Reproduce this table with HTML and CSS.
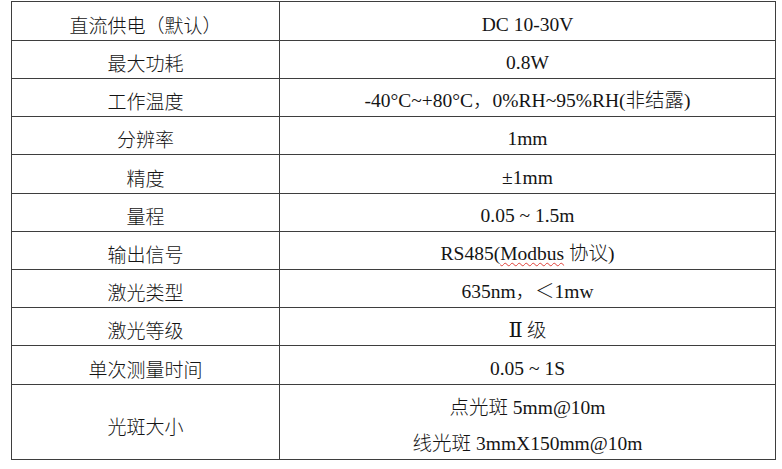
FILE: index.html
```html
<!DOCTYPE html>
<html lang="zh-CN">
<head>
<meta charset="utf-8">
<title>参数表</title>
<link rel="stylesheet" href="styles.css">
</head>
<body>
<div class="sheet">
  <div class="spec">
    <div class="cell name r39"><span>直流供电（默认）</span></div><div class="cell val r39"><span>DC 10-30V</span></div>
    <div class="cell name r38"><span>最大功耗</span></div><div class="cell val r38"><span>0.8W</span></div>
    <div class="cell name r38"><span>工作温度</span></div><div class="cell val r38"><span>-40°C~+80°C，0%RH~95%RH(非结露)</span></div>
    <div class="cell name r38"><span>分辨率</span></div><div class="cell val r38"><span>1mm</span></div>
    <div class="cell name r39"><span>精度</span></div><div class="cell val r39"><span>±1mm</span></div>
    <div class="cell name r38"><span>量程</span></div><div class="cell val r38"><span>0.05 ~ 1.5m</span></div>
    <div class="cell name r38"><span>输出信号</span></div><div class="cell val r38"><span>RS485(<span class="spell">Modbus</span> 协议)</span></div>
    <div class="cell name r38"><span>激光类型</span></div><div class="cell val r38"><span>635nm，＜1mw</span></div>
    <div class="cell name r38"><span>激光等级</span></div><div class="cell val r38"><span><span class="roman">Ⅱ</span>级</span></div>
    <div class="cell name r39"><span>单次测量时间</span></div><div class="cell val r39"><span>0.05 ~ 1S</span></div>
    <div class="cell name r75"><span>光斑大小</span></div><div class="cell val r75 multi"><div class="line">点光斑 5mm@10m</div><div class="line">线光斑 3mmX150mm@10m</div></div>
  </div>
</div>
</body>
</html>
```
FILE: styles.css
```css
html, body {
  margin: 0;
  background: #ffffff;
}
.sheet {
  padding: 1px 0 0 11px;
}
.spec {
  display: grid;
  grid-template-columns: 268px 496px;
  width: 765px;
  box-sizing: border-box;
  border-top: 1px solid #3e3e3e;
  border-left: 1px solid #3e3e3e;
  color: #141414;
}
.cell {
  box-sizing: border-box;
  border-right: 1px solid #3e3e3e;
  border-bottom: 1px solid #3e3e3e;
  padding-top: 7px;
  display: flex;
  flex-direction: column;
  align-items: center;
  justify-content: center;
  white-space: nowrap;
}
.r38 { height: 38px; }
.r39 { height: 39px; }
.r75 { height: 75px; }
.name {
  font-family: "Noto Sans CJK SC", "Noto Sans", sans-serif;
  font-weight: 300;
  font-size: 19px;
  line-height: 24px;
}
.val {
  font-family: "Liberation Serif", "Noto Sans CJK SC", serif;
  font-weight: 300;
  font-size: 19.5px;
  line-height: 24px;
}
.val.multi {
  padding-top: 8px;
}
.val .line {
  line-height: 36px;
}
.roman {
  font-family: "Liberation Serif", "DejaVu Serif", serif;
  font-size: 21px;
  margin-right: 4px;
}
.spell {
  text-decoration: underline wavy #e0413a;
  text-decoration-thickness: 1px;
  text-underline-offset: 2px;
}
```
